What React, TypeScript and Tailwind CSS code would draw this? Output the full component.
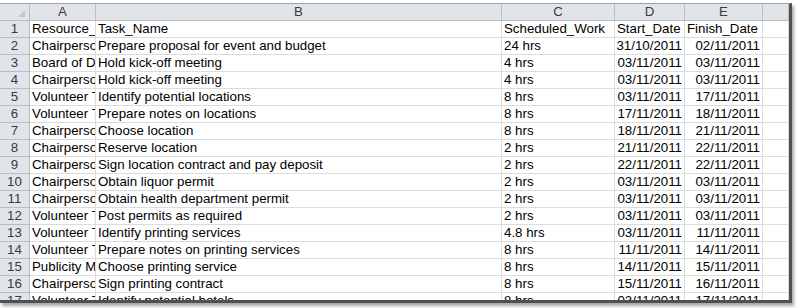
import React from 'react';

type Row = [string, string, string, string, string];

const rows: Row[] = [
  ['Resource_Names', 'Task_Name', 'Scheduled_Work', 'Start_Date', 'Finish_Date'],
  ['Chairperson', 'Prepare proposal for event and budget', '24 hrs', '31/10/2011', '02/11/2011'],
  ['Board of Directors', 'Hold kick-off meeting', '4 hrs', '03/11/2011', '03/11/2011'],
  ['Chairperson', 'Hold kick-off meeting', '4 hrs', '03/11/2011', '03/11/2011'],
  ['Volunteer Team', 'Identify potential locations', '8 hrs', '03/11/2011', '17/11/2011'],
  ['Volunteer Team', 'Prepare notes on locations', '8 hrs', '17/11/2011', '18/11/2011'],
  ['Chairperson', 'Choose location', '8 hrs', '18/11/2011', '21/11/2011'],
  ['Chairperson', 'Reserve location', '2 hrs', '21/11/2011', '22/11/2011'],
  ['Chairperson', 'Sign location contract and pay deposit', '2 hrs', '22/11/2011', '22/11/2011'],
  ['Chairperson', 'Obtain liquor permit', '2 hrs', '03/11/2011', '03/11/2011'],
  ['Chairperson', 'Obtain health department permit', '2 hrs', '03/11/2011', '03/11/2011'],
  ['Volunteer Team', 'Post permits as required', '2 hrs', '03/11/2011', '03/11/2011'],
  ['Volunteer Team', 'Identify printing services', '4.8 hrs', '03/11/2011', '11/11/2011'],
  ['Volunteer Team', 'Prepare notes on printing services', '8 hrs', '11/11/2011', '14/11/2011'],
  ['Publicity Manager', 'Choose printing service', '8 hrs', '14/11/2011', '15/11/2011'],
  ['Chairperson', 'Sign printing contract', '8 hrs', '15/11/2011', '16/11/2011'],
  ['Volunteer Team', 'Identify potential hotels', '8 hrs', '03/11/2011', '17/11/2011'],
];

const cols = ['A', 'B', 'C', 'D', 'E', ''];

const gridCols = 'grid grid-cols-[30px_66px_406px_113px_70px_78px_26px]';

function HeadCell({ label }: { label: string }) {
  return (
    <div className="flex h-[17px] items-center justify-center border-r border-b border-[#b8bec7] bg-[#e1e5ea] text-[#3b3b3b]">
      {label}
    </div>
  );
}

function Cell({ text, right, first }: { text: string; right?: boolean; first?: boolean }) {
  return (
    <div
      className={`flex h-[17px] items-end overflow-hidden whitespace-nowrap border-r border-b border-[#dadcdd] bg-white pb-[1px] leading-[14px] text-black ${
        right ? 'justify-end pr-[2px]' : 'pl-[2px]'
      } ${first ? 'first-cell' : ''}`}
    >
      {text}
    </div>
  );
}

export default function App() {
  return (
    <div className="h-[308px] w-[797px] overflow-hidden bg-white">
      <div
        className="mt-[3px] h-[300px] w-[792px] overflow-hidden border-t border-r-[3px] border-b-[3px] border-[#9da3aa] border-r-[#505050] border-b-[#505050] shadow-[2px_3px_3px_rgba(0,0,0,0.35)] text-[13.3px]"
        style={{ fontFamily: '"Liberation Sans", Arial, sans-serif' }}
      >
        {/* column headers */}
        <div className={gridCols}>
          <div className="flex h-[17px] items-end justify-end border-r border-b border-[#b8bec7] bg-[#e1e5ea] pr-[4px] pb-[3px]">
            <svg width="7" height="7" viewBox="0 0 7 7">
              <polygon points="7,0 7,7 0,7" fill="#c4c8cd" />
            </svg>
          </div>
          {cols.map((c, i) => (
            <HeadCell key={i} label={c} />
          ))}
        </div>

        {/* data rows */}
        {rows.map((r, i) => (
          <div key={i} className={gridCols}>
            <div className="flex h-[17px] items-center justify-center border-r border-b border-[#b8bec7] bg-[#e1e5ea] text-[#3b3b3b]">
              {i + 1}
            </div>
            <Cell text={r[0]} />
            <Cell text={r[1]} />
            <Cell text={r[2]} />
            <Cell text={r[3]} right={i > 0} />
            <Cell text={r[4]} right={i > 0} />
            <Cell text="" />
          </div>
        ))}
      </div>
    </div>
  );
}
